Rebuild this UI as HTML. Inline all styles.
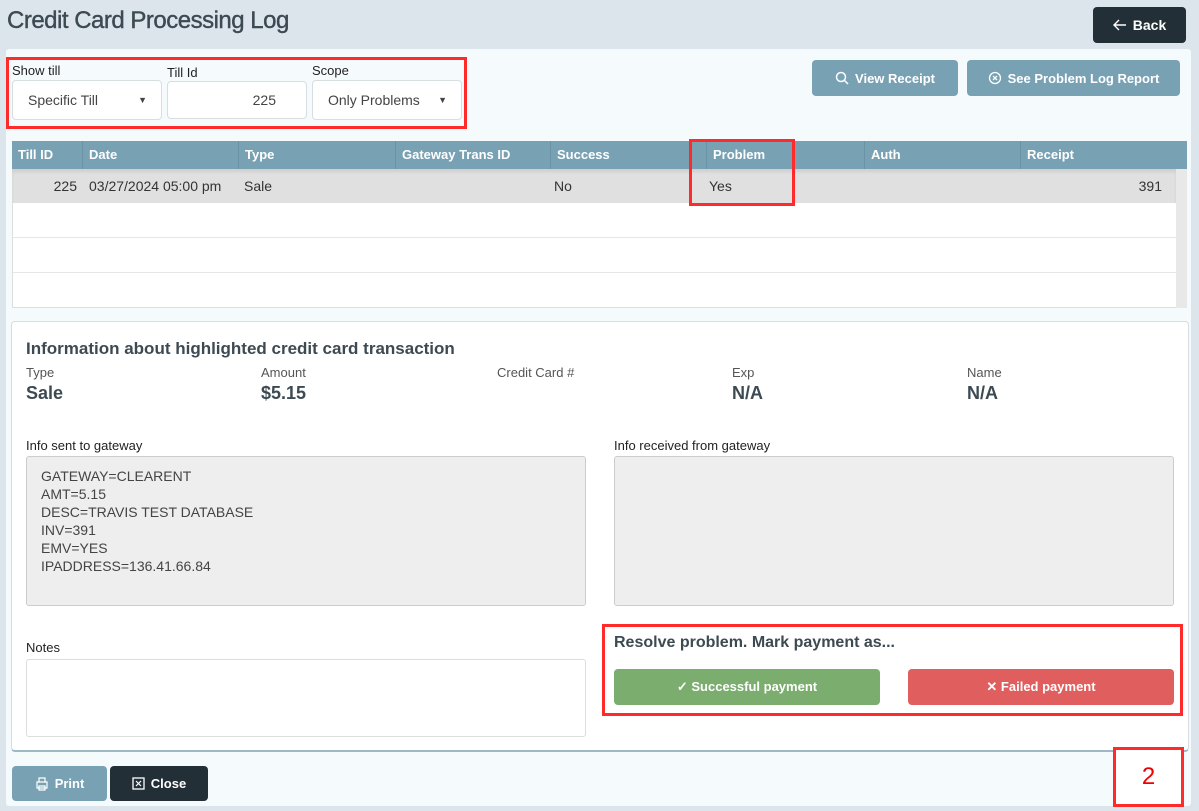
<!DOCTYPE html>
<html><head><meta charset="utf-8"><style>
*{box-sizing:border-box;margin:0;padding:0}
body{width:1199px;height:811px;background:#dce5ec;font-family:"Liberation Sans",sans-serif;color:#333;position:relative;overflow:hidden}
.a{position:absolute}
h1{position:absolute;left:7px;top:7px;font-size:24px;font-weight:normal;color:#3d4a52;letter-spacing:-0.5px;-webkit-text-stroke:0.4px #3d4a52}
.btn{position:absolute;border-radius:4px;color:#fff;font-weight:bold;font-size:13px;display:flex;align-items:center;justify-content:center;gap:6px}
.lbl{position:absolute;font-size:13px;color:#222}
.inp{position:absolute;background:#fff;border:1px solid #d8dde0;border-radius:4px;font-size:14px;color:#444;display:flex;align-items:center}
.th{position:absolute;top:0;height:28px;line-height:28px;color:#fff;font-weight:bold;font-size:13px;padding-left:6px;border-left:1px solid #6b93a6}
.td{position:absolute;top:0;height:34px;line-height:34px;font-size:14px;color:#333}
.ta{position:absolute;background:#eee;border:1px solid #ccc;border-radius:3px;font-size:14px;color:#444;padding:10px 14px;line-height:18px}
.rb{position:absolute;border:3px solid #ff2a2a}
.sm{font-size:13px;color:#555}
.big{font-size:18px;font-weight:bold;color:#3d4a52}
</style></head><body>
<h1>Credit Card Processing Log</h1>
<div class="btn" style="left:1093px;top:7px;width:93px;height:36px;background:#232f36;font-size:14px"><svg width="14" height="12" viewBox="0 0 14 12"><path d="M13 6H2M6 1L1 6l5 5" fill="none" stroke="#fff" stroke-width="1.4"/></svg>Back</div>
<div class="a" style="left:6px;top:49px;width:1185px;height:757px;background:#f5fafd;border-radius:3px"></div>

<div class="lbl" style="left:12px;top:63px">Show till</div>
<div class="lbl" style="left:167px;top:65px">Till Id</div>
<div class="lbl" style="left:312px;top:63px">Scope</div>
<div class="inp" style="left:12px;top:80px;width:150px;height:40px;padding-left:15px">Specific Till<span style="position:absolute;right:14px;font-size:9px">▼</span></div>
<div class="inp" style="left:167px;top:81px;width:140px;height:38px;justify-content:flex-end;padding-right:30px">225</div>
<div class="inp" style="left:312px;top:80px;width:150px;height:40px;padding-left:15px">Only Problems<span style="position:absolute;right:14px;font-size:9px">▼</span></div>
<div class="rb" style="left:6px;top:57px;width:461px;height:72px"></div>

<div class="btn" style="left:812px;top:60px;width:146px;height:36px;background:#78a1b4"><svg width="14" height="14" viewBox="0 0 14 14"><circle cx="6" cy="6" r="4.5" fill="none" stroke="#fff" stroke-width="1.5"/><path d="M9.5 9.5L13 13" stroke="#fff" stroke-width="1.5"/></svg>View Receipt</div>
<div class="btn" style="left:967px;top:60px;width:213px;height:36px;background:#78a1b4"><svg width="14" height="14" viewBox="0 0 14 14"><circle cx="7" cy="7" r="5.5" fill="none" stroke="#fff" stroke-width="1.3"/><path d="M5 5L9 9M9 5L5 9" stroke="#fff" stroke-width="1.3"/></svg>See Problem Log Report</div>

<div class="a" style="left:12px;top:141px;width:1175px;height:167px;background:#fff;border:1px solid #ddd"></div>
<div class="a" style="left:12px;top:141px;width:1175px;height:28px;background:#78a1b4">
<div class="th" style="left:0;border:none">Till ID</div><div class="th" style="left:70px">Date</div><div class="th" style="left:226px">Type</div><div class="th" style="left:383px">Gateway Trans ID</div><div class="th" style="left:538px">Success</div><div class="th" style="left:694px">Problem</div><div class="th" style="left:852px">Auth</div><div class="th" style="left:1008px">Receipt</div></div>
<div class="a" style="left:12px;top:169px;width:1164px;height:34px;background:#e0e0e0;box-shadow:inset 0 3px 3px rgba(0,0,0,.08)">
<div class="td" style="left:0;width:65px;text-align:right">225</div><div class="td" style="left:77px">03/27/2024 05:00 pm</div><div class="td" style="left:232px">Sale</div><div class="td" style="left:542px">No</div><div class="td" style="left:697px">Yes</div><div class="td" style="right:14px">391</div></div>
<div class="a" style="left:13px;top:237px;width:1163px;border-top:1px solid #e6e6e6"></div>
<div class="a" style="left:13px;top:272px;width:1163px;border-top:1px solid #e6e6e6"></div>
<div class="a" style="left:1176px;top:169px;width:11px;height:139px;background:#e8e8e8"></div>
<div class="rb" style="left:689px;top:139px;width:106px;height:67px"></div>

<div class="a" style="left:11px;top:321px;width:1178px;height:431px;background:#fff;border:1px solid #d5dde2;border-radius:4px;border-bottom:2px solid #9fb8c6"></div>
<div class="a" style="left:26px;top:339px;font-weight:bold;font-size:17px;color:#3d4a52">Information about highlighted credit card transaction</div>
<div class="a sm" style="left:26px;top:365px">Type</div><div class="a big" style="left:26px;top:383px">Sale</div>
<div class="a sm" style="left:261px;top:365px">Amount</div><div class="a big" style="left:261px;top:383px">$5.15</div>
<div class="a sm" style="left:497px;top:365px">Credit Card #</div>
<div class="a sm" style="left:732px;top:365px">Exp</div><div class="a big" style="left:732px;top:383px">N/A</div>
<div class="a sm" style="left:967px;top:365px">Name</div><div class="a big" style="left:967px;top:383px">N/A</div>
<div class="lbl" style="left:26px;top:438px">Info sent to gateway</div>
<div class="lbl" style="left:614px;top:438px">Info received from gateway</div>
<div class="ta" style="left:26px;top:456px;width:560px;height:150px">GATEWAY=CLEARENT<br>AMT=5.15<br>DESC=TRAVIS TEST DATABASE<br>INV=391<br>EMV=YES<br>IPADDRESS=136.41.66.84</div>
<div class="ta" style="left:614px;top:456px;width:560px;height:150px"></div>
<div class="lbl" style="left:26px;top:640px">Notes</div>
<div class="ta" style="left:26px;top:659px;width:560px;height:78px;background:#fff;border-color:#ddd"></div>
<div class="a" style="left:614px;top:634px;font-size:16px;font-weight:bold;color:#3d4a52">Resolve problem. Mark payment as...</div>
<div class="btn" style="left:614px;top:669px;width:266px;height:36px;background:#7aad6e">✓ Successful payment</div>
<div class="btn" style="left:908px;top:669px;width:266px;height:36px;background:#e05e5e">✕ Failed payment</div>
<div class="rb" style="left:602px;top:624px;width:581px;height:92px"></div>

<div class="btn" style="left:12px;top:766px;width:95px;height:35px;background:#78a1b4"><svg width="14" height="14" viewBox="0 0 14 14"><path d="M4 5V1h6v4M2 5h10v6H2zM4 9h6v4H4z" fill="none" stroke="#fff" stroke-width="1.2"/></svg>Print</div>
<div class="btn" style="left:110px;top:766px;width:98px;height:35px;background:#232f36"><svg width="13" height="13" viewBox="0 0 13 13"><rect x="1" y="1" width="11" height="11" fill="none" stroke="#fff" stroke-width="1.3"/><path d="M4 4l5 5M9 4l-5 5" stroke="#fff" stroke-width="1.2"/></svg>Close</div>
<div class="rb" style="left:1113px;top:747px;width:71px;height:60px;background:#fff;color:#e00;font-size:24px;text-align:center;line-height:54px">2</div>
</body></html>
